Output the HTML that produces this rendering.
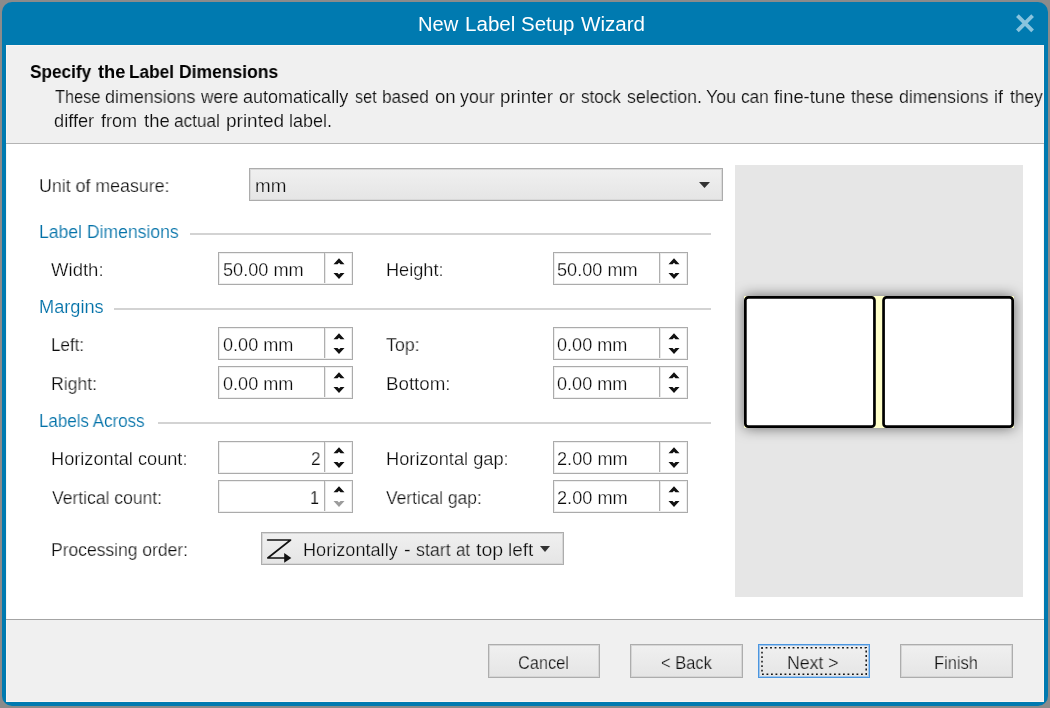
<!DOCTYPE html>
<html lang="en">
<head>
<meta charset="utf-8">
<title>New Label Setup Wizard</title>
<style>
html,body{margin:0;padding:0}
body{width:1050px;height:708px;overflow:hidden;position:relative;background:#8b8b8b;font-family:"Liberation Sans",sans-serif}
.abs,.t,.sp,.btn,.ln{position:absolute}
.t{white-space:pre;line-height:1;transform-origin:0 0;will-change:transform}
.g{position:absolute;left:0;top:0;font-size:0}
.win{left:2px;top:2px;width:1046px;height:704px;background:#007ab0;border-radius:10px}
.hdr{left:6px;top:45px;width:1038px;height:98px;background:#f0f0f0}
.hl{left:6px;top:143px;width:1038px;height:1px;background:#b4b4b4}
.cnt{left:6px;top:144px;width:1038px;height:475px;background:#fff}
.fl{left:6px;top:619px;width:1038px;height:1px;background:#a4a4a4}
.ftr{left:6px;top:620px;width:1038px;height:82px;background:#f0f0f0}
.ln{height:2px;background:#d3d3d3}
.combo{left:249px;top:168px;width:472px;height:31px;border:1px solid #acacac;background:linear-gradient(#f0f0f0,#e5e5e5);box-shadow:inset 0 0 0 1px #d9d9d9}
.sp{width:133px;height:31px;border:1px solid #ababab;background:#fff;box-shadow:inset 0 0 0 1px #eee}
.sp i{position:absolute;left:105px;top:0;width:1px;height:30px;background:#afafaf;box-shadow:1px 0 0 #e9e9e9}
.sp svg{position:absolute;left:115px;top:4.7px;overflow:visible}
.btn{height:32px;border:1px solid #adadad;background:linear-gradient(#f0f0f0,#e5e5e5);box-sizing:content-box;box-shadow:inset 0 0 0 1px #d6d6d6}
.prev{left:735px;top:165px;width:288px;height:432px;background:#e6e6e6}
</style>
</head>
<body>
<div class="abs win"></div>
<div class="abs hdr"></div>
<div class="abs cnt"></div>
<div class="abs ftr"></div>
<div class="abs" style="left:6px;top:45px;width:1036px;height:655px;border:1px solid #fbf5f2"></div>
<div class="abs hl"></div>
<div class="abs fl"></div>

<!-- close X -->
<svg class="abs" style="left:1014px;top:12px" width="22" height="22" viewBox="0 0 22 22"><path d="M3.4 3.6 L18.6 18.8 M18.6 3.6 L3.4 18.8" stroke="#8ac4de" stroke-width="3.8" fill="none"/></svg>

<!-- unit combo -->
<div class="abs combo"></div>
<svg class="abs" style="left:699px;top:182px" width="11" height="6" viewBox="0 0 11 6"><path d="M0 0H11L5.5 6Z" fill="#333"/></svg>

<!-- section lines -->
<div class="ln" style="left:190px;top:233px;width:521px"></div>
<div class="ln" style="left:114px;top:308px;width:597px"></div>
<div class="ln" style="left:158px;top:422px;width:553px"></div>

<!-- spinners -->
<div class="sp" style="left:218px;top:252px"><i></i><svg width="11" height="21" viewBox="0 0 11 21"><path d="M-0.5 6.2L5 0.2L10.5 6.2H6.5L5 4.8L3.5 6.2Z" fill="#111"/><path d="M-0.5 15L5 21L10.5 15H6.5L5 16.4L3.5 15Z" fill="#111"/></svg></div>
<div class="sp" style="left:553px;top:252px"><i></i><svg width="11" height="21" viewBox="0 0 11 21"><path d="M-0.5 6.2L5 0.2L10.5 6.2H6.5L5 4.8L3.5 6.2Z" fill="#111"/><path d="M-0.5 15L5 21L10.5 15H6.5L5 16.4L3.5 15Z" fill="#111"/></svg></div>
<div class="sp" style="left:218px;top:327px"><i></i><svg width="11" height="21" viewBox="0 0 11 21"><path d="M-0.5 6.2L5 0.2L10.5 6.2H6.5L5 4.8L3.5 6.2Z" fill="#111"/><path d="M-0.5 15L5 21L10.5 15H6.5L5 16.4L3.5 15Z" fill="#111"/></svg></div>
<div class="sp" style="left:553px;top:327px"><i></i><svg width="11" height="21" viewBox="0 0 11 21"><path d="M-0.5 6.2L5 0.2L10.5 6.2H6.5L5 4.8L3.5 6.2Z" fill="#111"/><path d="M-0.5 15L5 21L10.5 15H6.5L5 16.4L3.5 15Z" fill="#111"/></svg></div>
<div class="sp" style="left:218px;top:366px"><i></i><svg width="11" height="21" viewBox="0 0 11 21"><path d="M-0.5 6.2L5 0.2L10.5 6.2H6.5L5 4.8L3.5 6.2Z" fill="#111"/><path d="M-0.5 15L5 21L10.5 15H6.5L5 16.4L3.5 15Z" fill="#111"/></svg></div>
<div class="sp" style="left:553px;top:366px"><i></i><svg width="11" height="21" viewBox="0 0 11 21"><path d="M-0.5 6.2L5 0.2L10.5 6.2H6.5L5 4.8L3.5 6.2Z" fill="#111"/><path d="M-0.5 15L5 21L10.5 15H6.5L5 16.4L3.5 15Z" fill="#111"/></svg></div>
<div class="sp" style="left:218px;top:441px"><i></i><svg width="11" height="21" viewBox="0 0 11 21"><path d="M-0.5 6.2L5 0.2L10.5 6.2H6.5L5 4.8L3.5 6.2Z" fill="#111"/><path d="M-0.5 15L5 21L10.5 15H6.5L5 16.4L3.5 15Z" fill="#111"/></svg></div>
<div class="sp" style="left:553px;top:441px"><i></i><svg width="11" height="21" viewBox="0 0 11 21"><path d="M-0.5 6.2L5 0.2L10.5 6.2H6.5L5 4.8L3.5 6.2Z" fill="#111"/><path d="M-0.5 15L5 21L10.5 15H6.5L5 16.4L3.5 15Z" fill="#111"/></svg></div>
<div class="sp" style="left:218px;top:480px"><i></i><svg width="11" height="21" viewBox="0 0 11 21"><path d="M-0.5 6.2L5 0.2L10.5 6.2H6.5L5 4.8L3.5 6.2Z" fill="#111"/><path d="M-0.5 15L5 21L10.5 15H6.5L5 16.4L3.5 15Z" fill="#9c9c9c"/></svg></div>
<div class="sp" style="left:553px;top:480px"><i></i><svg width="11" height="21" viewBox="0 0 11 21"><path d="M-0.5 6.2L5 0.2L10.5 6.2H6.5L5 4.8L3.5 6.2Z" fill="#111"/><path d="M-0.5 15L5 21L10.5 15H6.5L5 16.4L3.5 15Z" fill="#111"/></svg></div>

<!-- processing order button -->
<div class="btn" style="left:261px;top:532px;width:301px;height:31px"></div>
<svg class="abs" style="left:264px;top:536px" width="30" height="28" viewBox="0 0 30 28"><path d="M3.6 4H26.6L3.8 22H22" stroke="#111" stroke-width="1.6" fill="none" stroke-linejoin="round" stroke-linecap="round"/><path d="M20.2 17.1L27.3 22L20.2 26.8Z" fill="#111"/></svg>
<svg class="abs" style="left:540px;top:546px" width="10" height="6" viewBox="0 0 10 6"><path d="M0 0H10L5 6Z" fill="#333"/></svg>

<!-- preview -->
<div class="abs prev" style="overflow:hidden"><div class="abs" style="left:9px;top:131px;width:270px;height:132px;background:#ffffc9;border-radius:1px;box-shadow:0 0 14px 0 rgba(0,0,0,.56)"></div></div>
<svg class="abs" style="left:740px;top:292px" width="280" height="140" viewBox="740 292 280 140"><rect x="745.35" y="297.35" width="129.1" height="129.3" rx="3" ry="3" fill="#fff" stroke="#000" stroke-width="2.7"/><rect x="883.55" y="297.35" width="129.1" height="129.3" rx="3" ry="3" fill="#fff" stroke="#000" stroke-width="2.7"/></svg>

<!-- buttons -->
<div class="btn" style="left:488px;top:644px;width:110px"></div>
<div class="btn" style="left:630px;top:644px;width:111px"></div>
<div class="btn" style="left:758px;top:644px;width:110px;border-color:#4b96e0;box-shadow:inset 0 0 0 1px #a3c6ea"></div>
<svg class="abs" style="left:758px;top:644px" width="112" height="34" viewBox="758 644 112 34"><rect x="762" y="647.7" width="104.2" height="26.5" fill="none" stroke="#111" stroke-width="1.5" stroke-dasharray="1.8 2.7" stroke-dashoffset="0.9"/></svg>
<div class="btn" style="left:900px;top:644px;width:111px"></div>

<span class="t" style="left:38.99px;top:177.02px;font-size:18px;color:#0c0c0c;transform:scaleX(0.9884);-webkit-text-stroke:.25px #fff">Unit of measure:</span>
<span class="t" style="left:254.52px;top:177.02px;font-size:18px;color:#0c0c0c;transform:scaleX(1.0454);-webkit-text-stroke:.25px #ebebeb">mm</span>
<span class="t" style="left:38.93px;top:223.02px;font-size:18px;color:#0271a8;transform:scaleX(0.9766);-webkit-text-stroke:.15px #fff">Label Dimensions</span>
<span class="t" style="left:51.00px;top:261.02px;font-size:18px;color:#0c0c0c;transform:scaleX(1.0307);-webkit-text-stroke:.25px #fff">Width:</span>
<span class="t" style="left:222.83px;top:261.02px;font-size:18px;color:#0c0c0c;transform:scaleX(1.0084);-webkit-text-stroke:.25px #fff">50.00 mm</span>
<span class="t" style="left:385.78px;top:261.02px;font-size:18px;color:#0c0c0c;transform:scaleX(1.0093);-webkit-text-stroke:.25px #fff">Height:</span>
<span class="t" style="left:556.93px;top:261.02px;font-size:18px;color:#0c0c0c;transform:scaleX(1.0071);-webkit-text-stroke:.25px #fff">50.00 mm</span>
<span class="t" style="left:38.88px;top:298.02px;font-size:18px;color:#0271a8;transform:scaleX(1.0105);-webkit-text-stroke:.15px #fff">Margins</span>
<span class="t" style="left:51.17px;top:336.02px;font-size:18px;color:#0c0c0c;transform:scaleX(0.9440);-webkit-text-stroke:.25px #fff">Left:</span>
<span class="t" style="left:223.13px;top:336.02px;font-size:18px;color:#0c0c0c;transform:scaleX(1.0054);-webkit-text-stroke:.25px #fff">0.00 mm</span>
<span class="t" style="left:385.72px;top:336.02px;font-size:18px;color:#0c0c0c;transform:scaleX(0.9871);-webkit-text-stroke:.25px #fff">Top:</span>
<span class="t" style="left:557.23px;top:336.02px;font-size:18px;color:#0c0c0c;transform:scaleX(1.0054);-webkit-text-stroke:.25px #fff">0.00 mm</span>
<span class="t" style="left:51.12px;top:375.02px;font-size:18px;color:#0c0c0c;transform:scaleX(0.9798);-webkit-text-stroke:.25px #fff">Right:</span>
<span class="t" style="left:223.13px;top:375.02px;font-size:18px;color:#0c0c0c;transform:scaleX(1.0054);-webkit-text-stroke:.25px #fff">0.00 mm</span>
<span class="t" style="left:386.04px;top:375.02px;font-size:18px;color:#0c0c0c;transform:scaleX(1.0408);-webkit-text-stroke:.25px #fff">Bottom:</span>
<span class="t" style="left:557.23px;top:375.02px;font-size:18px;color:#0c0c0c;transform:scaleX(1.0054);-webkit-text-stroke:.25px #fff">0.00 mm</span>
<span class="t" style="left:38.97px;top:412.02px;font-size:18px;color:#0271a8;transform:scaleX(0.9425);-webkit-text-stroke:.15px #fff">Labels Across</span>
<span class="t" style="left:51.08px;top:450.02px;font-size:18px;color:#0c0c0c;transform:scaleX(1.0103);-webkit-text-stroke:.25px #fff">Horizontal count:</span>
<span class="t" style="left:310.60px;top:450.02px;font-size:18px;color:#0c0c0c;transform:scaleX(0.9481);-webkit-text-stroke:.25px #fff">2</span>
<span class="t" style="left:385.78px;top:450.02px;font-size:18px;color:#0c0c0c;transform:scaleX(1.0132);-webkit-text-stroke:.25px #fff">Horizontal gap:</span>
<span class="t" style="left:556.95px;top:450.02px;font-size:18px;color:#0c0c0c;transform:scaleX(1.0096);-webkit-text-stroke:.25px #fff">2.00 mm</span>
<span class="t" style="left:51.50px;top:489.02px;font-size:18px;color:#0c0c0c;transform:scaleX(0.9736);-webkit-text-stroke:.25px #fff">Vertical count:</span>
<span class="t" style="left:310.32px;top:489.02px;font-size:18px;color:#0c0c0c;transform:scaleX(0.9000);-webkit-text-stroke:.25px #fff">1</span>
<span class="t" style="left:386.40px;top:489.02px;font-size:18px;color:#0c0c0c;transform:scaleX(0.9668);-webkit-text-stroke:.25px #fff">Vertical gap:</span>
<span class="t" style="left:556.95px;top:489.02px;font-size:18px;color:#0c0c0c;transform:scaleX(1.0096);-webkit-text-stroke:.25px #fff">2.00 mm</span>
<span class="t" style="left:51.13px;top:541.02px;font-size:18px;color:#0c0c0c;transform:scaleX(0.9715);-webkit-text-stroke:.25px #fff">Processing order:</span>
<span class="t" style="left:517.73px;top:654.02px;font-size:18px;color:#0c0c0c;transform:scaleX(0.9093);-webkit-text-stroke:.25px #ebebeb">Cancel</span>
<span class="t" style="left:661.13px;top:654.02px;font-size:18px;color:#0c0c0c;transform:scaleX(0.9151);-webkit-text-stroke:.25px #ebebeb">&lt; Back</span>
<span class="t" style="left:787.22px;top:654.02px;font-size:18px;color:#0c0c0c;transform:scaleX(0.9812);-webkit-text-stroke:.25px #ebebeb">Next &gt;</span>
<span class="t" style="left:934.41px;top:654.02px;font-size:18px;color:#0c0c0c;transform:scaleX(0.9145);-webkit-text-stroke:.25px #ebebeb">Finish</span>
<span class="g"><span class="t" style="left:417.63px;top:14.02px;font-size:20px;color:#ffffff;transform:scaleX(1.0054)">New</span> <span class="t" style="left:465.09px;top:14.02px;font-size:20px;color:#ffffff;transform:scaleX(1.0292)">Label</span> <span class="t" style="left:520.66px;top:14.02px;font-size:20px;color:#ffffff;transform:scaleX(1.0230)">Setup</span> <span class="t" style="left:581.30px;top:14.02px;font-size:20px;color:#ffffff;transform:scaleX(1.0294)">Wizard</span></span>
<span class="g"><span class="t" style="left:30.13px;top:63.02px;font-size:18px;color:#000000;transform:scaleX(0.9552);font-weight:700">Specify</span> <span class="t" style="left:97.60px;top:63.02px;font-size:18px;color:#000000;transform:scaleX(1.0169);font-weight:700">the</span> <span class="t" style="left:129.12px;top:63.02px;font-size:18px;color:#000000;transform:scaleX(0.9571);font-weight:700">Label</span> <span class="t" style="left:178.71px;top:63.02px;font-size:18px;color:#000000;transform:scaleX(0.9724);font-weight:700">Dimensions</span></span>
<span class="g"><span class="t" style="left:54.54px;top:88.02px;font-size:18px;color:#101010;transform:scaleX(0.9079);-webkit-text-stroke:.15px #f0f0f0">These</span> <span class="t" style="left:104.64px;top:88.02px;font-size:18px;color:#101010;transform:scaleX(0.9931);-webkit-text-stroke:.15px #f0f0f0">dimensions</span> <span class="t" style="left:200.77px;top:88.02px;font-size:18px;color:#101010;transform:scaleX(0.9568);-webkit-text-stroke:.15px #f0f0f0">were</span> <span class="t" style="left:242.74px;top:88.02px;font-size:18px;color:#101010;transform:scaleX(1.0011);-webkit-text-stroke:.15px #f0f0f0">automatically</span> <span class="t" style="left:354.54px;top:88.02px;font-size:18px;color:#101010;transform:scaleX(0.9000);-webkit-text-stroke:.15px #f0f0f0">set</span> <span class="t" style="left:382.23px;top:88.02px;font-size:18px;color:#101010;transform:scaleX(0.9551);-webkit-text-stroke:.15px #f0f0f0">based</span> <span class="t" style="left:434.62px;top:88.02px;font-size:18px;color:#101010;transform:scaleX(1.0353);-webkit-text-stroke:.15px #f0f0f0">on</span> <span class="t" style="left:459.80px;top:88.02px;font-size:18px;color:#101010;transform:scaleX(0.9878);-webkit-text-stroke:.15px #f0f0f0">your</span> <span class="t" style="left:500.23px;top:88.02px;font-size:18px;color:#101010;transform:scaleX(1.0380);-webkit-text-stroke:.15px #f0f0f0">printer</span> <span class="t" style="left:558.95px;top:88.02px;font-size:18px;color:#101010;transform:scaleX(0.9769);-webkit-text-stroke:.15px #f0f0f0">or</span> <span class="t" style="left:580.93px;top:88.02px;font-size:18px;color:#101010;transform:scaleX(0.9474);-webkit-text-stroke:.15px #f0f0f0">stock</span> <span class="t" style="left:627.32px;top:88.02px;font-size:18px;color:#101010;transform:scaleX(0.9860);-webkit-text-stroke:.15px #f0f0f0">selection.</span> <span class="t" style="left:705.72px;top:88.02px;font-size:18px;color:#101010;transform:scaleX(0.9903);-webkit-text-stroke:.15px #f0f0f0">You</span> <span class="t" style="left:740.86px;top:88.02px;font-size:18px;color:#101010;transform:scaleX(0.9545);-webkit-text-stroke:.15px #f0f0f0">can</span> <span class="t" style="left:773.60px;top:88.02px;font-size:18px;color:#101010;transform:scaleX(1.0199);-webkit-text-stroke:.15px #f0f0f0">fine-tune</span> <span class="t" style="left:851.40px;top:88.02px;font-size:18px;color:#101010;transform:scaleX(0.9630);-webkit-text-stroke:.15px #f0f0f0">these</span> <span class="t" style="left:898.75px;top:88.02px;font-size:18px;color:#101010;transform:scaleX(0.9820);-webkit-text-stroke:.15px #f0f0f0">dimensions</span> <span class="t" style="left:994.12px;top:88.02px;font-size:18px;color:#101010;transform:scaleX(0.9576);-webkit-text-stroke:.15px #f0f0f0">if</span> <span class="t" style="left:1009.70px;top:88.02px;font-size:18px;color:#101010;transform:scaleX(0.9611);-webkit-text-stroke:.15px #f0f0f0">they</span></span>
<span class="g"><span class="t" style="left:54.13px;top:112.02px;font-size:18px;color:#101010;transform:scaleX(1.0118);-webkit-text-stroke:.15px #f0f0f0">differ</span> <span class="t" style="left:101.10px;top:112.02px;font-size:18px;color:#101010;transform:scaleX(1.0009);-webkit-text-stroke:.15px #f0f0f0">from</span> <span class="t" style="left:143.90px;top:112.02px;font-size:18px;color:#101010;transform:scaleX(1.0250);-webkit-text-stroke:.15px #f0f0f0">the</span> <span class="t" style="left:174.36px;top:112.02px;font-size:18px;color:#101010;transform:scaleX(0.9550);-webkit-text-stroke:.15px #f0f0f0">actual</span> <span class="t" style="left:225.61px;top:112.02px;font-size:18px;color:#101010;transform:scaleX(1.0548);-webkit-text-stroke:.15px #f0f0f0">printed</span> <span class="t" style="left:289.18px;top:112.02px;font-size:18px;color:#101010;transform:scaleX(0.9955);-webkit-text-stroke:.15px #f0f0f0">label.</span></span>
<span class="g"><span class="t" style="left:302.58px;top:541.02px;font-size:18px;color:#0c0c0c;transform:scaleX(1.0073);-webkit-text-stroke:.25px #ebebeb">Horizontally</span> <span class="t" style="left:403.69px;top:541.02px;font-size:18px;color:#0c0c0c;transform:scaleX(1.1200);-webkit-text-stroke:.25px #ebebeb">-</span> <span class="t" style="left:415.72px;top:541.02px;font-size:18px;color:#0c0c0c;transform:scaleX(0.9889);-webkit-text-stroke:.25px #ebebeb">start</span> <span class="t" style="left:456.17px;top:541.02px;font-size:18px;color:#0c0c0c;transform:scaleX(0.9372);-webkit-text-stroke:.25px #ebebeb">at</span> <span class="t" style="left:476.30px;top:541.02px;font-size:18px;color:#0c0c0c;transform:scaleX(1.0867);-webkit-text-stroke:.25px #ebebeb">top</span> <span class="t" style="left:507.91px;top:541.02px;font-size:18px;color:#0c0c0c;transform:scaleX(1.0545);-webkit-text-stroke:.25px #ebebeb">left</span></span>
</body>
</html>
